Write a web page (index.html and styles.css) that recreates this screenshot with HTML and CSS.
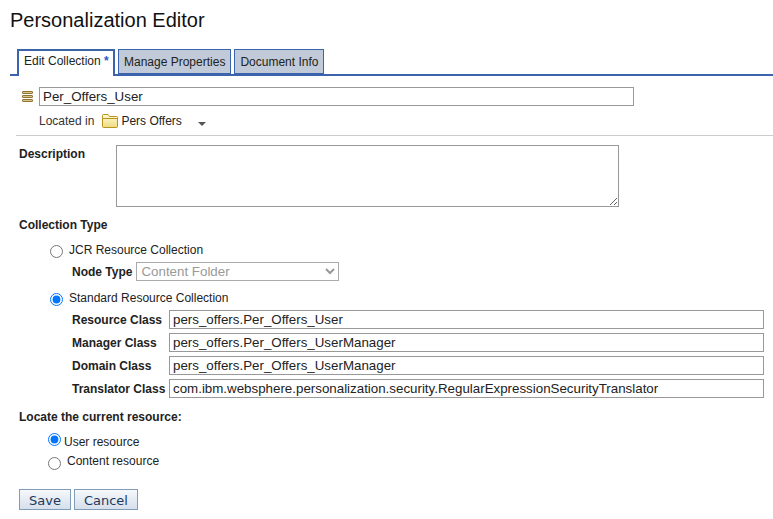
FILE: index.html
```html
<!DOCTYPE html>
<html>
<head>
    <title>Personalization Editor</title>
    <link rel="stylesheet" href="styles.css">
</head>
<body>
    <h1 class="page-title">Personalization Editor</h1>

    <div class="tabs">
        <a class="tab tab-active">Edit Collection <span class="dirty">*</span></a>
        <a class="tab">Manage Properties</a>
        <a class="tab">Document Info</a>
    </div>

    <div class="name-row">
        <svg class="stack-icon" width="13" height="12" viewBox="0 0 13 12">
            <rect x="1.5" y="0.5" width="10" height="2" rx="0.5" fill="#dcc483" stroke="#8f7434"/>
            <rect x="1.5" y="4.5" width="10" height="2" rx="0.5" fill="#dcc483" stroke="#8f7434"/>
            <rect x="1.5" y="8.5" width="10" height="2" rx="0.5" fill="#dcc483" stroke="#8f7434"/>
        </svg>
        <input class="field name-field" type="text" value="Per_Offers_User">
    </div>

    <div class="location-row">
        <span class="location-label">Located in</span>
        <svg class="folder-icon" width="16" height="14" viewBox="0 0 16 14">
            <defs>
                <linearGradient id="folderFill" x1="0" y1="0" x2="0" y2="1">
                    <stop offset="0" stop-color="#fffbd8"/>
                    <stop offset="1" stop-color="#eedc80"/>
                </linearGradient>
            </defs>
            <path d="M0.5 12.5V1.5Q0.5 0.5 1.5 0.5H6L7.5 2.5H14.5Q15.5 2.5 15.5 3.5V12.5Q15.5 13.5 14.5 13.5H1.5Q0.5 13.5 0.5 12.5Z" fill="url(#folderFill)" stroke="#b8941e"/>
            <path d="M1 4.5H15" stroke="#b8941e"/>
        </svg>
        <span>Pers Offers</span>
        <span class="caret"></span>
    </div>

    <hr class="divider">

    <div class="description-row">
        <label class="bold description-label">Description</label>
        <textarea class="field description-field"></textarea>
    </div>

    <div class="bold section-title">Collection Type</div>

    <div class="radio-row jcr-row">
        <input type="radio" name="type">
        <label>JCR Resource Collection</label>
    </div>
    <div class="node-row">
        <label class="bold">Node Type</label>
        <select class="node-select" disabled>
            <option>Content Folder</option>
        </select>
    </div>

    <div class="radio-row standard-row">
        <input type="radio" name="type" checked>
        <label>Standard Resource Collection</label>
    </div>
    <div class="class-grid">
        <label class="bold">Resource Class</label>
        <input class="field" type="text" value="pers_offers.Per_Offers_User">
        <label class="bold">Manager Class</label>
        <input class="field" type="text" value="pers_offers.Per_Offers_UserManager">
        <label class="bold">Domain Class</label>
        <input class="field" type="text" value="pers_offers.Per_Offers_UserManager">
        <label class="bold">Translator Class</label>
        <input class="field" type="text" value="com.ibm.websphere.personalization.security.RegularExpressionSecurityTranslator">
    </div>

    <div class="bold locate-title">Locate the current resource:</div>
    <div class="radio-row user-row">
        <input type="radio" name="locate" checked>
        <label>User resource</label>
    </div>
    <div class="radio-row content-row">
        <input type="radio" name="locate">
        <label>Content resource</label>
    </div>

    <div class="buttons">
        <button class="btn" type="button">Save</button>
        <button class="btn" type="button">Cancel</button>
    </div>
</body>
</html>
```

FILE: styles.css
```css
html,
body {
    height: 519px;
    overflow: hidden;
}

body {
    font-family: 'Liberation Sans', Arial, sans-serif;
    font-size: 12px;
    background-color: #fff;
    color: #222;
    margin: 0;
}

.bold {
    font-weight: bold;
}

.page-title {
    font-size: 20px;
    line-height: 23px;
    font-weight: normal;
    color: #111;
    margin: 0;
    padding: 9px 0 0 10px;
}

.tabs {
    display: flex;
    align-items: flex-end;
    gap: 3px;
    height: 26px;
    margin: 16px 0 0 10px;
    padding-left: 7px;
    border-bottom: 2px solid #3c64ac;
}

.tab {
    height: 25px;
    line-height: 24px;
    padding: 0 5px;
    box-sizing: border-box;
    white-space: nowrap;
    border: 1px solid #3c64ac;
    background-color: #c0cad8;
    color: #222;
}

.tab-active {
    height: 27px;
    margin-bottom: -2px;
    width: 98px;
    border: 2px solid #3c64ac;
    border-bottom: none;
    background-color: #fff;
    line-height: 21px;
}

.dirty {
    color: #2a5ad0;
    font-weight: bold;
}

.field {
    box-sizing: border-box;
    font-family: 'Liberation Sans', Arial, sans-serif;
    font-size: 13.33px;
    color: #222;
    height: 19px;
    padding: 0 3px;
    margin: 0;
    border: 1px solid #999;
    border-radius: 0;
    background-color: #fff;
}

.name-row {
    display: flex;
    align-items: center;
    margin-top: 11px;
    padding-left: 21px;
}

.stack-icon {
    margin-right: 5px;
}

.name-field {
    width: 595px;
}

.location-row {
    display: flex;
    align-items: center;
    height: 15px;
    margin-top: 7px;
    padding-left: 39px;
}

.location-label {
    color: #333;
}

.folder-icon {
    margin: 1px 3px 0 8px;
}

.caret {
    width: 0;
    height: 0;
    margin: 7px 0 0 16px;
    border-left: 4px solid transparent;
    border-right: 4px solid transparent;
    border-top: 4px solid #555;
}

.divider {
    height: 1px;
    border: none;
    background-color: #ccc;
    margin: 7px 0 0 16px;
}

.description-row {
    display: flex;
    margin-top: 9px;
    padding-left: 19px;
}

.description-label {
    width: 97px;
    padding-top: 2px;
}

.description-field {
    display: block;
    width: 503px;
    height: 62px;
}

.section-title {
    margin-top: 11px;
    line-height: 14px;
    padding-left: 19px;
}

.radio-row {
    display: flex;
    align-items: center;
    height: 14px;
    padding-left: 50px;
}

.radio-row input {
    width: 13px;
    height: 13px;
    margin: 2px 6px 0 0;
}

.jcr-row {
    margin-top: 11px;
}

.node-row {
    display: flex;
    align-items: center;
    margin-top: 5px;
    padding-left: 72px;
    gap: 4px;
}

.node-select {
    box-sizing: border-box;
    width: 203px;
    height: 19px;
    font-family: 'Liberation Sans', Arial, sans-serif;
    font-size: 13.33px;
    padding: 0;
    border: 1px solid #aaa;
    border-radius: 0;
    background-color: #fff;
    color: #999;
    opacity: 1;
}

.standard-row {
    margin-top: 10px;
}

.class-grid {
    display: grid;
    grid-template-columns: 97px 595px;
    gap: 4px 0;
    margin-top: 5px;
    padding-left: 72px;
    align-items: center;
}

.locate-title {
    margin-top: 12px;
    line-height: 14px;
    padding-left: 19px;
}

.user-row {
    margin-top: 11px;
    padding-left: 48px;
}

.user-row input {
    margin: 0 3px 6px 0;
}

.content-row {
    margin-top: 5px;
    padding-left: 48px;
}

.content-row input {
    margin-top: 4px;
}

.buttons {
    display: flex;
    gap: 3px;
    margin-top: 21px;
    padding-left: 19px;
}

.btn {
    box-sizing: border-box;
    height: 21px;
    padding: 2px 9px 0;
    font-family: 'DejaVu Sans', sans-serif;
    font-size: 13px;
    color: #1c3a5c;
    border: 1px solid #7f9db9;
    border-radius: 0;
    background: linear-gradient(#f6f8fb, #d6dfec);
}
```
